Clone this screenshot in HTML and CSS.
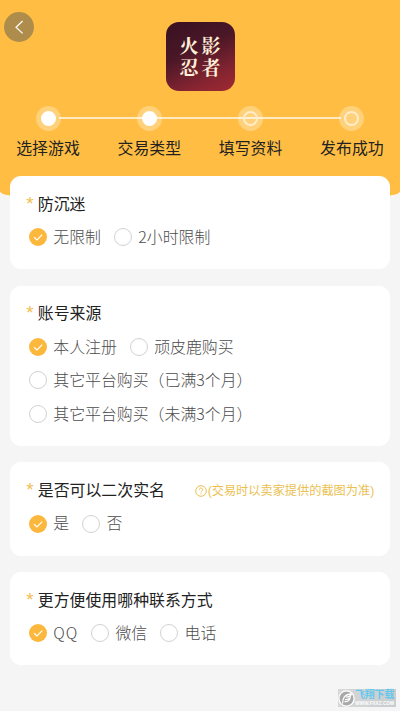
FILE: index.html
```html
<!DOCTYPE html>
<html lang="zh-CN">
<head>
<meta charset="utf-8">
<title>填写资料</title>
<link rel="stylesheet" href="styles.css">
</head>
<body>
<header class="hero">
  <button class="back" aria-label="返回"><svg width="30" height="30" viewBox="0 0 30 30"><path d="M18.6 9 L12 15.2 L18.6 21.4"/></svg></button>
  <div class="game">火影<br>忍者</div>
  <ol class="steps">
    <li class="done"><i></i><span>选择游戏</span></li>
    <li class="done"><i></i><span>交易类型</span></li>
    <li><i></i><span>填写资料</span></li>
    <li><i></i><span>发布成功</span></li>
  </ol>
</header>
<main class="cards">
  <section class="card">
    <h2><b>*</b><span>防沉迷</span></h2>
    <div class="options">
      <label class="on"><i><svg viewBox="0 0 18 18"><path d="M5 9.3 L8 12 L13.2 6.7"/></svg></i><span>无限制</span></label>
      <label><i></i><span>2小时限制</span></label>
    </div>
  </section>
  <section class="card">
    <h2><b>*</b><span>账号来源</span></h2>
    <div class="options">
      <label class="on"><i><svg viewBox="0 0 18 18"><path d="M5 9.3 L8 12 L13.2 6.7"/></svg></i><span>本人注册</span></label>
      <label><i></i><span>顽皮鹿购买</span></label>
      <label><i></i><span>其它平台购买（已满3个月）</span></label>
      <label><i></i><span>其它平台购买（未满3个月）</span></label>
    </div>
  </section>
  <section class="card">
    <h2><b>*</b><span>是否可以二次实名</span>
      <small><svg width="12" height="12" viewBox="0 0 12 12"><circle cx="6" cy="6" r="5.3"/><path d="M4.4 4.8 C4.4 2.5 7.7 2.5 7.7 4.7 C7.7 5.9 6 5.9 6 7.3 M6 8.3 V9.2"/></svg>(交易时以卖家提供的截图为准)</small></h2>
    <div class="options">
      <label class="on"><i><svg viewBox="0 0 18 18"><path d="M5 9.3 L8 12 L13.2 6.7"/></svg></i><span>是</span></label>
      <label><i></i><span>否</span></label>
    </div>
  </section>
  <section class="card">
    <h2><b>*</b><span>更方便使用哪种联系方式</span></h2>
    <div class="options">
      <label class="on"><i><svg viewBox="0 0 18 18"><path d="M5 9.3 L8 12 L13.2 6.7"/></svg></i><span class="latin">QQ</span></label>
      <label><i></i><span>微信</span></label>
      <label><i></i><span>电话</span></label>
    </div>
  </section>
</main>
<aside class="mark">
  <svg width="17" height="17" viewBox="0 0 17 17"><circle cx="8.5" cy="8.5" r="7.6"/><path d="M4.5 13.5 C5 8 6 4.5 13.5 4 C12.5 6.5 10.5 7 8 7.2 M7 9.7 C9 9.8 11 9 12 7.8 C11.5 11 9 12 6.5 11.5"/></svg>
  <div><strong>飞翔下载</strong><em>WWW.FXXZ.COM</em></div>
</aside>
</body>
</html>
```
FILE: styles.css
```css
* { box-sizing: border-box; }
body {
  margin: 0;
  height: 711px;
  overflow: hidden;
  position: relative;
  background: #f5f5f5;
  font-family: "Liberation Sans", "Noto Sans CJK SC", sans-serif;
  font-size: 15.9px;
  color: #222;
}
i, em { font-style: normal; }

.hero {
  position: relative;
  height: 196px;
  padding-top: 22px;
  background: #ffbe43;
  border-radius: 0 0 16px 16px / 0 0 5px 5px;
}
.back {
  position: absolute;
  left: 4px;
  top: 12px;
  width: 30px;
  height: 30px;
  padding: 0;
  border: 0;
  border-radius: 50%;
  background: #ae8d4c;
}
.back svg { display: block; fill: none; stroke: #fff; stroke-width: 1.2; }

.game {
  width: 69px;
  height: 69px;
  margin: 0 auto;
  padding: 12px 0 0 14px;
  border-radius: 13px;
  background: linear-gradient(155deg, #3a1222 5%, #4a1727 40%, #832431 75%, #a02a32);
  font-family: "Noto Serif CJK SC", "Noto Sans CJK SC", serif;
  font-weight: 700;
  font-size: 19px;
  line-height: 22px;
  letter-spacing: 3px;
  color: #ffefd8;
}

.steps {
  list-style: none;
  margin: 15px 0 0;
  padding: 0 0 0 16px;
  position: relative;
  display: flex;
  gap: 37.3px;
}
.steps::before {
  content: "";
  position: absolute;
  left: 59px;
  right: 59px;
  top: 11px;
  height: 1.5px;
  background: #ffe9c0;
}
.steps li {
  position: relative;
  width: 64px;
  display: flex;
  flex-direction: column;
  align-items: center;
}
.steps i {
  width: 25px;
  height: 25px;
  border-radius: 50%;
  background: rgba(255, 255, 255, .3);
  display: grid;
  place-items: center;
}
.steps i::before {
  content: "";
  width: 11px;
  height: 11px;
  border-radius: 50%;
  border: 2px solid #ffedcb;
}
.steps .done i::before { background: #fff; border-color: #fff; }
.steps span { margin-top: 6px; line-height: 24px; white-space: nowrap; }

.cards {
  position: relative;
  margin: -20px 10.3px 0 10.3px;
  display: flex;
  flex-direction: column;
  gap: 16.5px;
}
.card {
  background: #fff;
  border-radius: 11px;
  padding: 16.7px 15.5px 15.2px 16px;
}
.card h2 {
  margin: 0;
  height: 24px;
  display: flex;
  align-items: center;
  font-size: inherit;
  font-weight: 400;
  line-height: 24px;
  white-space: nowrap;
}
.card b {
  width: 11.5px;
  font-weight: 400;
  font-size: 19px;
  color: #f3bd52;
  height: 26px;
}
.card small {
  margin-left: auto;
  display: flex;
  align-items: center;
  gap: 1px;
  font-size: 12.2px;
  color: #ebbf52;
}
.card small svg { fill: none; stroke: #ebbf52; stroke-width: 1; }
.options {
  margin-top: 3.8px;
  padding-left: 2.7px;
  display: flex;
  flex-wrap: wrap;
  column-gap: 13px;
}
.options label {
  height: 33.5px;
  display: flex;
  align-items: center;
  gap: 6.3px;
  color: #4c4c4c;
  font-family: "Noto Sans CJK SC", sans-serif;
  font-weight: 300;
  line-height: 24px;
  white-space: nowrap;
}
.options label span { margin-top: -.2px; }
.options .latin { letter-spacing: .9px; }
.options i {
  width: 18px;
  height: 18px;
  border: 1px solid #d2d2d2;
  border-radius: 50%;
}
.options .on i { border: 0; background: #fcb83c; }
.options svg { display: block; fill: none; stroke: #fff; stroke-width: 1.2; }

.mark {
  position: absolute;
  left: 338px;
  top: 689px;
  width: 58px;
  height: 18px;
  display: flex;
  align-items: center;
  gap: 0;
  background: linear-gradient(90deg, #d8d8d8, #c8cdcf);
}
.mark svg { flex: none; fill: #a9a9a9; stroke: #fff; stroke-width: 1.3; }
.mark div { display: flex; flex-direction: column; align-items: center; }
.mark strong { font-size: 9.8px; line-height: 12px; color: #62c8ee; white-space: nowrap; }
.mark em { font-size: 4.7px; line-height: 6px; font-weight: 700; color: #fff; }
```
